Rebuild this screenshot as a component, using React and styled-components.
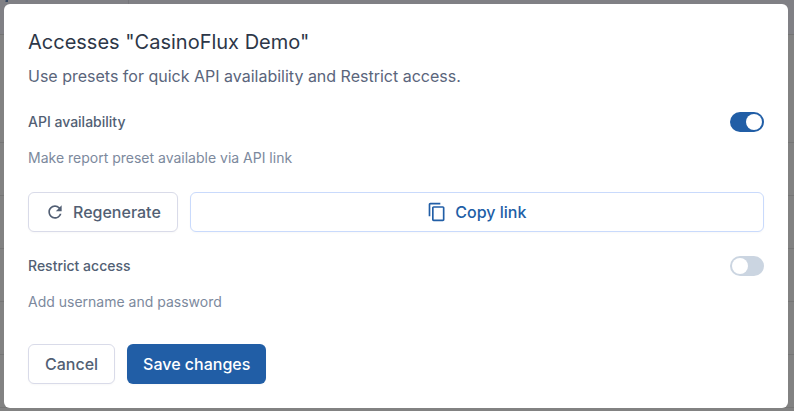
import React, { useId, useState } from 'react';
import styled, { createGlobalStyle } from 'styled-components';
import { MdContentCopy, MdRefresh } from 'react-icons/md';

const GlobalStyle = createGlobalStyle`
  *, *::before, *::after {
    box-sizing: border-box;
  }

  body {
    margin: 0;
    font-family: Inter, 'Liberation Sans', sans-serif;
    color: #2d3748;
    background: #828282;
  }

  h2, p {
    margin: 0;
  }
`;

/* dimmed table behind the modal: link text, column line, header, rows */
const Overlay = styled.div`
  min-height: 100vh;
  padding: 4px 6px 3px 4px;
  background:
    linear-gradient(100deg, transparent 20%, #34465f 60%) 4px 0 / 4px 2px no-repeat,
    linear-gradient(#76767b, #76767b) 128px 0 / 1px 34px no-repeat,
    linear-gradient(#747474, #747474) 0 34px / 100% 1px no-repeat,
    linear-gradient(#808085, #808085) 0 0 / 100% 34px no-repeat,
    linear-gradient(#828282, #828282) 0 0 / 100% 100px no-repeat,
    repeating-linear-gradient(
      #828282 0 36px,
      #767676 36px 37px,
      #828282 37px 53px
    );
`;

const Modal = styled.div`
  display: flex;
  flex-direction: column;
  gap: 24px;
  padding: 24px;
  background: #fff;
  border-radius: 6px;
`;

const Header = styled.div`
  display: flex;
  flex-direction: column;
  gap: 8px;
`;

const Title = styled.h2`
  font-size: 20px;
  line-height: 28px;
  font-weight: 400;
  color: #2d3748;
`;

const Description = styled.p`
  font-size: 16px;
  line-height: 24px;
  color: #5a657b;
`;

const Section = styled.div`
  display: flex;
  flex-direction: column;
  gap: 16px;
`;

const SettingRow = styled.div`
  display: flex;
  align-items: center;
  justify-content: space-between;
`;

const Label = styled.label`
  font-size: 14px;
  line-height: 20px;
  font-weight: 500;
  color: #525f74;
`;

const Hint = styled.p`
  font-size: 14px;
  line-height: 20px;
  color: #7c899d;
`;

const Switch = styled.input`
  appearance: none;
  display: flex;
  width: 34px;
  height: 20px;
  margin: 0;
  padding: 2px;
  border-radius: 10px;
  background: #cbd5e1;
  cursor: pointer;

  &::before {
    content: '';
    width: 16px;
    height: 16px;
    border-radius: 50%;
    background: #fff;
  }

  &:checked {
    justify-content: flex-end;
    background: #215ea6;
  }
`;

const Buttons = styled.div`
  display: flex;
  gap: 12px;
  margin-top: ${({ $footer }) => ($footer ? '8px' : '0')};
`;

const variants = {
  default: { color: '#525f74', border: '1px solid #d9dbe9', background: '#fff' },
  link: { color: '#215ea6', border: '1px solid #c9dafc', background: '#fff' },
  primary: { color: '#fff', border: 'none', background: '#215ea6' },
};

const Button = styled.button`
  display: flex;
  flex: ${({ $grow }) => ($grow ? '1' : 'none')};
  align-items: center;
  justify-content: center;
  gap: 8px;
  height: 40px;
  padding: 0 16px;
  border: ${({ $variant }) => variants[$variant].border};
  border-radius: 6px;
  background: ${({ $variant }) => variants[$variant].background};
  box-shadow: 0 1px 2px rgba(0, 0, 0, 0.03);
  color: ${({ $variant }) => variants[$variant].color};
  font-family: inherit;
  font-size: 16px;
  line-height: 24px;
  font-weight: 500;
  cursor: pointer;
`;

const Setting = ({ label, hint, checked, onChange }) => {
  const id = useId();

  return (
    <Section>
      <SettingRow>
        <Label htmlFor={id}>{label}</Label>
        <Switch
          id={id}
          type="checkbox"
          role="switch"
          checked={checked}
          onChange={(e) => onChange(e.target.checked)}
        />
      </SettingRow>
      <Hint>{hint}</Hint>
    </Section>
  );
};

const App = () => {
  const [apiAvailable, setApiAvailable] = useState(true);
  const [restricted, setRestricted] = useState(false);

  return (
    <>
      <GlobalStyle />
      <Overlay>
        <Modal role="dialog" aria-labelledby="modal-title">
          <Header>
            <Title id="modal-title">Accesses "CasinoFlux Demo"</Title>
            <Description>
              Use presets for quick API availability and Restrict access.
            </Description>
          </Header>
          <Setting
            label="API availability"
            hint="Make report preset available via API link"
            checked={apiAvailable}
            onChange={setApiAvailable}
          />
          {apiAvailable && (
            <Buttons>
              <Button type="button" $variant="default">
                <MdRefresh size={20} />
                Regenerate
              </Button>
              <Button type="button" $variant="link" $grow>
                <MdContentCopy size={20} />
                Copy link
              </Button>
            </Buttons>
          )}
          <Setting
            label="Restrict access"
            hint="Add username and password"
            checked={restricted}
            onChange={setRestricted}
          />
          <Buttons $footer>
            <Button type="button" $variant="default">Cancel</Button>
            <Button type="button" $variant="primary">Save changes</Button>
          </Buttons>
        </Modal>
      </Overlay>
    </>
  );
};

export default App;
